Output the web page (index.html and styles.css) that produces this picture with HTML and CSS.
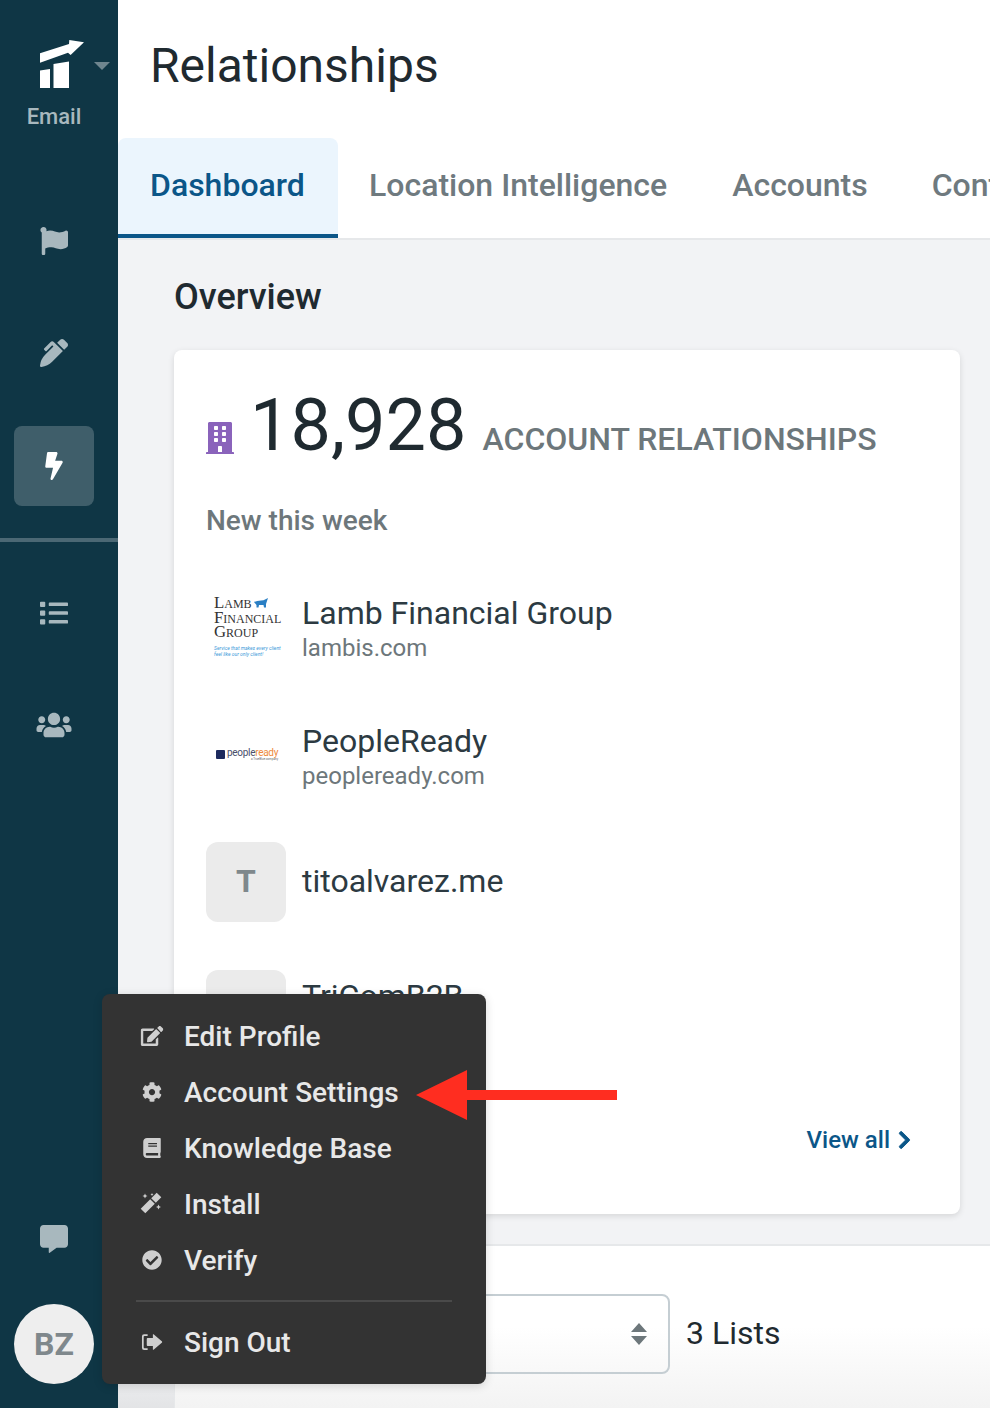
FILE: index.html
```html
<!DOCTYPE html>
<html lang="en">
  <head>
    <meta charset="UTF-8" />
    <title>Relationships</title>
    <link rel="stylesheet" href="styles.css">
  </head>
  <body>
    <div class="app">
      <div class="sidebar">
        <div class="brand">
          <svg class="brand-logo" viewBox="0 0 46 48" width="46" height="48">
            <path fill="#fff" d="M0 13.300 L29 4 L29.300 0 L44 2.300 L30.600 15 L28 12.700 L0 22.700 Z" />
            <path fill="#fff" d="M0 30.600 L10 29 V48 H0 Z" />
            <path fill="#fff" d="M13.500 24 L29 21.600 V48 H13.500 Z" />
          </svg>
          <span class="brand-caret"></span>
          <div class="brand-label">Email</div>
        </div>
        <a class="nav-item">
          <svg viewBox="0 0 512 512" width="28" height="28"><path d="M349.565 98.783C295.978 98.783 251.721 64 184.348 64c-24.955 0-47.309 4.384-68.045 12.013a55.947 55.947 0 0 0 3.586-23.562C118.117 24.015 94.806 1.206 66.338.048 34.345-1.254 8 24.296 8 56c0 19.026 9.497 35.825 24 45.945V488c0 13.255 10.745 24 24 24h16c13.255 0 24-10.745 24-24v-94.4c28.311-12.064 63.582-22.122 114.435-22.122 53.588 0 97.844 34.783 165.217 34.783 48.169 0 86.667-16.294 122.505-40.858C506.84 359.452 512 349.571 512 339.045v-243.1c0-23.393-24.269-38.87-45.485-29.016-34.338 15.948-76.454 31.854-116.95 31.854z" /></svg>
        </a>
        <a class="nav-item nav-pen">
          <svg viewBox="0 0 512 512" width="28" height="28"><path d="M497.94 74.17l-60.11-60.11c-18.75-18.75-49.16-18.75-67.91 0l-56.55 56.55 128.02 128.02 56.55-56.55c18.75-18.75 18.75-49.15 0-67.91zm-246.8-20.53c-15.62-15.62-40.94-15.62-56.56 0L75.8 172.43c-6.25 6.25-6.25 16.38 0 22.62l22.63 22.63c6.25 6.25 16.38 6.25 22.63 0l101.82-101.82 22.63 22.62L93.95 290.03A327.038 327.038 0 0 0 .17 485.11l-.03.23c-1.7 15.28 11.21 28.2 26.49 26.51a327.02 327.02 0 0 0 195.34-93.8l196.79-196.79-82.77-82.77-84.85-84.85z" /></svg>
        </a>
        <a class="nav-item active">
          <svg viewBox="0 0 320 512" width="18" height="28"><path d="M296 160H180.6l42.6-129.8C227.2 15 215.7 0 200 0H56C44 0 33.8 8.9 32.2 20.8l-32 240C-1.700 275.2 9.500 288 24 288h118.700L96.600 482.500c-3.600 15.200 8 29.500 23.300 29.500 8.400 0 16.400-4.400 20.800-12l176-304c9.300-15.900-2.200-36-20.700-36z" /></svg>
        </a>
        <div class="nav-divider"></div>
        <a class="nav-item">
          <svg viewBox="0 0 512 512" width="28" height="28"><path d="M80 368H16a16 16 0 0 0-16 16v64a16 16 0 0 0 16 16h64a16 16 0 0 0 16-16v-64a16 16 0 0 0-16-16zm0-320H16A16 16 0 0 0 0 64v64a16 16 0 0 0 16 16h64a16 16 0 0 0 16-16V64a16 16 0 0 0-16-16zm0 160H16a16 16 0 0 0-16 16v64a16 16 0 0 0 16 16h64a16 16 0 0 0 16-16v-64a16 16 0 0 0-16-16zm416 176H176a16 16 0 0 0-16 16v32a16 16 0 0 0 16 16h320a16 16 0 0 0 16-16v-32a16 16 0 0 0-16-16zm0-320H176a16 16 0 0 0-16 16v32a16 16 0 0 0 16 16h320a16 16 0 0 0 16-16V80a16 16 0 0 0-16-16zm0 160H176a16 16 0 0 0-16 16v32a16 16 0 0 0 16 16h320a16 16 0 0 0 16-16v-32a16 16 0 0 0-16-16z" /></svg>
        </a>
        <a class="nav-item">
          <svg viewBox="0 0 640 512" width="36" height="28"><path d="M96 224c35.300 0 64-28.700 64-64s-28.700-64-64-64-64 28.700-64 64 28.700 64 64 64zm448 0c35.300 0 64-28.700 64-64s-28.700-64-64-64-64 28.700-64 64 28.700 64 64 64zm32 32h-64c-17.600 0-33.500 7.100-45.100 18.600 40.300 22.100 68.900 62 75.100 109.400h66c17.700 0 32-14.300 32-32v-32c0-35.300-28.700-64-64-64zm-256 0c61.900 0 112-50.100 112-112S381.900 32 320 32 208 82.100 208 144s50.100 112 112 112zm76.800 32h-8.300c-20.800 10-43.900 16-68.500 16s-47.600-6-68.500-16h-8.300C179.600 288 128 339.600 128 403.200V432c0 26.500 21.500 48 48 48h288c26.500 0 48-21.500 48-48v-28.800c0-63.600-51.600-115.200-115.200-115.200zm-223.700-13.400C161.500 263.100 145.600 256 128 256H64c-35.300 0-64 28.700-64 64v32c0 17.700 14.300 32 32 32h65.900c6.300-47.400 34.900-87.300 75.200-109.400z" /></svg>
        </a>
        <a class="nav-item chat">
          <svg viewBox="0 0 512 512" width="28" height="28"><path d="M448 0H64C28.700 0 0 28.700 0 64v288c0 35.300 28.700 64 64 64h96v84c0 9.800 11.200 15.500 19.100 9.700L304 416h144c35.300 0 64-28.700 64-64V64c0-35.300-28.700-64-64-64z" /></svg>
        </a>
        <div class="avatar">BZ</div>

        <div class="user-menu">
          <a class="menu-item">
            <svg viewBox="0 0 576 512" width="23" height="20"><path d="M402.600 83.200l90.200 90.200c3.800 3.800 3.800 10 0 13.800L274.400 405.600l-92.800 10.300c-12.400 1.400-22.900-9.100-21.500-21.500l10.300-92.800L388.800 83.200c3.800-3.800 10-3.800 13.800 0zm162-22.900l-48.800-48.800c-15.200-15.200-39.900-15.200-55.200 0l-35.400 35.400c-3.800 3.800-3.800 10 0 13.800l90.200 90.200c3.800 3.800 10 3.800 13.800 0l35.400-35.400c15.200-15.300 15.200-40 0-55.200zM384 346.200V448H64V128h229.800c3.200 0 6.200-1.300 8.500-3.500l40-40c7.600-7.600 2.200-20.500-8.500-20.500H48C21.500 64 0 85.500 0 112v352c0 26.500 21.500 48 48 48h352c26.500 0 48-21.500 48-48V306.200c0-10.700-12.900-16-20.500-8.500l-40 40c-2.200 2.300-3.500 5.300-3.500 8.500z" /></svg>
            Edit Profile
          </a>
          <a class="menu-item">
            <svg viewBox="0 0 512 512" width="20" height="20"><path d="M487.400 315.700l-42.600-24.600c4.300-23.200 4.300-47 0-70.200l42.600-24.600c4.900-2.800 7.100-8.600 5.500-14-11.100-35.600-30-67.800-54.700-94.600-3.800-4.100-10-5.100-14.800-2.300L380.800 110c-17.900-15.400-38.500-27.300-60.800-35.100V25.800c0-5.600-3.900-10.500-9.400-11.700-36.700-8.200-74.300-7.800-109.200 0-5.500 1.200-9.400 6.100-9.400 11.700V75c-22.200 7.900-42.800 19.800-60.800 35.100L88.700 85.500c-4.900-2.800-11-1.900-14.800 2.300-24.700 26.700-43.600 58.900-54.700 94.600-1.700 5.400.6 11.200 5.500 14L67.300 221c-4.300 23.200-4.300 47 0 70.200l-42.600 24.600c-4.900 2.800-7.100 8.600-5.500 14 11.100 35.600 30 67.800 54.700 94.600 3.800 4.100 10 5.100 14.800 2.300l42.600-24.600c17.900 15.400 38.500 27.300 60.800 35.100v49.200c0 5.600 3.900 10.500 9.400 11.700 36.700 8.200 74.300 7.800 109.200 0 5.500-1.200 9.400-6.100 9.400-11.700v-49.200c22.200-7.900 42.800-19.800 60.800-35.100l42.600 24.600c4.900 2.800 11 1.900 14.800-2.300 24.700-26.700 43.600-58.900 54.700-94.600 1.500-5.500-.7-11.300-5.600-14.100zM256 336c-44.100 0-80-35.900-80-80s35.900-80 80-80 80 35.900 80 80-35.900 80-80 80z" /></svg>
            Account Settings
          </a>
          <a class="menu-item">
            <svg viewBox="0 0 448 512" width="18" height="20"><path d="M448 360V24c0-13.300-10.700-24-24-24H96C43 0 0 43 0 96v320c0 53 43 96 96 96h328c13.300 0 24-10.700 24-24v-16c0-7.500-3.500-14.300-8.900-18.700-4.200-15.400-4.200-59.300 0-74.700 5.400-4.300 8.900-11.100 8.900-18.600zM128 134c0-3.300 2.700-6 6-6h212c3.300 0 6 2.700 6 6v20c0 3.300-2.700 6-6 6H134c-3.300 0-6-2.700-6-6v-20zm0 64c0-3.300 2.700-6 6-6h212c3.300 0 6 2.700 6 6v20c0 3.300-2.700 6-6 6H134c-3.300 0-6-2.700-6-6v-20zm253.400 250H96c-17.700 0-32-14.300-32-32 0-17.600 14.400-32 32-32h285.400c-1.900 17.100-1.900 46.900 0 64z" /></svg>
            Knowledge Base
          </a>
          <a class="menu-item">
            <svg viewBox="0 0 24 24" width="24" height="24"><path d="M0.700 16.700 L5.300 21.300 L14.800 11.800 L10.200 7.200 Z M11.200 6.200 L15.800 10.800 L21.300 5.300 L16.700 0.700 Z M5 1.500 L5.800 3.200 L7.500 4 L5.800 4.800 L5 6.500 L4.200 4.800 L2.500 4 L4.200 3.200 Z M12 1 L12.500 2 L13.500 2.500 L12.500 3 L12 4 L11.500 3 L10.500 2.500 L11.500 2 Z M18.500 12.500 L19.300 14.200 L21 15 L19.300 15.800 L18.500 17.500 L17.700 15.800 L16 15 L17.700 14.200 Z" /></svg>
            Install
          </a>
          <a class="menu-item">
            <svg viewBox="0 0 512 512" width="20" height="20"><path d="M504 256c0 136.967-111.033 248-248 248S8 392.967 8 256 119.033 8 256 8s248 111.033 248 248zM227.314 387.314l184-184c6.248-6.248 6.248-16.379 0-22.627l-22.627-22.627c-6.248-6.249-16.379-6.249-22.628 0L216 308.118l-70.059-70.059c-6.248-6.248-16.379-6.248-22.628 0l-22.627 22.627c-6.248 6.248-6.248 16.379 0 22.627l104 104c6.249 6.249 16.379 6.249 22.628.001z" /></svg>
            Verify
          </a>
          <div class="menu-divider"></div>
          <a class="menu-item">
            <svg viewBox="0 0 24 20" width="21" height="18"><path d="M13 5.500 V1.500 Q13 0.800 13.800 1.200 L23.500 9.300 Q24 10 23.500 10.700 L13.800 18.800 Q13 19.200 13 18.500 V14.500 H7 Q6 14.500 6 13.500 V6.500 Q6 5.500 7 5.500 Z M7 1 V3 H3.500 Q2.500 3 2.500 4 V16 Q2.500 17 3.500 17 H7 V19 H3 Q0.500 19 0.500 16.500 V3.500 Q0.500 1 3 1 Z" /></svg>
            Sign Out
          </a>
        </div>
      </div>

      <div class="main">
        <div class="page-header">
          <h1>Relationships</h1>
        </div>
        <div class="tabs">
          <a class="tab active">Dashboard</a>
          <a class="tab tab-long">Location Intelligence</a>
          <a class="tab">Accounts</a>
          <a class="tab">Contacts</a>
        </div>

        <div class="overview">
          <h2>Overview</h2>
          <div class="card">
            <div class="stat">
              <svg class="stat-icon" viewBox="0 0 448 512" width="28" height="32"><path d="M436 480h-20V24c0-13.255-10.745-24-24-24H56C42.745 0 32 10.745 32 24v456H12c-6.627 0-12 5.373-12 12v20h448v-20c0-6.627-5.373-12-12-12zM128 76c0-6.627 5.373-12 12-12h40c6.627 0 12 5.373 12 12v40c0 6.627-5.373 12-12 12h-40c-6.627 0-12-5.373-12-12V76zm0 96c0-6.627 5.373-12 12-12h40c6.627 0 12 5.373 12 12v40c0 6.627-5.373 12-12 12h-40c-6.627 0-12-5.373-12-12v-40zm52 148h-40c-6.627 0-12-5.373-12-12v-40c0-6.627 5.373-12 12-12h40c6.627 0 12 5.373 12 12v40c0 6.627-5.373 12-12 12zm76 160h-64v-84c0-6.627 5.373-12 12-12h40c6.627 0 12 5.373 12 12v84zm64-172c0 6.627-5.373 12-12 12h-40c-6.627 0-12-5.373-12-12v-40c0-6.627 5.373-12 12-12h40c6.627 0 12 5.373 12 12v40zm0-96c0 6.627-5.373 12-12 12h-40c-6.627 0-12-5.373-12-12v-40c0-6.627 5.373-12 12-12h40c6.627 0 12 5.373 12 12v40zm0-96c0 6.627-5.373 12-12 12h-40c-6.627 0-12-5.373-12-12V76c0-6.627 5.373-12 12-12h40c6.627 0 12 5.373 12 12v40z" /></svg>
              <span class="stat-number">18,928</span>
              <span class="stat-label">ACCOUNT RELATIONSHIPS</span>
            </div>
            <div class="new-title">New this week</div>
            <div class="account-list">
              <div class="account">
                <div class="logo logo-lamb">
                  <div class="lamb-name">Lamb <svg viewBox="0 0 14 10" width="14" height="10"><path fill="#2a7fc4" d="M0 4 Q3 2.500 7 2.500 Q10 2.500 11 1.500 L14 0 L13 3 L12 6 V9.500 H10 L9.500 7 H5 L4.500 9.500 H2.500 L2.500 7 Z" /></svg></div>
                  <div class="lamb-name">Financial</div>
                  <div class="lamb-name">Group</div>
                  <div class="lamb-tag">Service that makes every client feel like our only client!</div>
                </div>
                <div class="account-info">
                  <div class="account-name">Lamb Financial Group</div>
                  <div class="account-domain">lambis.com</div>
                </div>
              </div>
              <div class="account">
                <div class="logo logo-people">
                  <span class="people-mark"></span>
                  <div>
                    <div class="people-word">people<span class="people-ready">ready</span></div>
                    <div class="people-sub">a TrueBlue company</div>
                  </div>
                </div>
                <div class="account-info">
                  <div class="account-name">PeopleReady</div>
                  <div class="account-domain">peopleready.com</div>
                </div>
              </div>
              <div class="account">
                <div class="logo logo-letter">T</div>
                <div class="account-name single">titoalvarez.me</div>
              </div>
              <div class="account">
                <div class="logo logo-letter"></div>
                <div class="account-name cut">TriComB2B</div>
              </div>
            </div>
            <a class="view-all">
              View all
              <svg viewBox="0 0 320 512" width="13" height="20"><path d="M285.476 272.971L91.132 467.314c-9.373 9.373-24.569 9.373-33.941 0l-22.667-22.667c-9.357-9.357-9.375-24.522-.04-33.901L188.505 256 34.484 101.255c-9.335-9.379-9.317-24.544.04-33.901l22.667-22.667c9.373-9.373 24.569-9.373 33.941 0L285.475 239.030c9.373 9.372 9.373 24.568.001 33.941z" /></svg>
            </a>
          </div>
        </div>

        <div class="lists-section">
          <div class="lists-panel">
            <div class="list-select">
              <svg viewBox="0 0 16 22" width="16" height="22"><path d="M8 0 L16 9 H0 Z M0 13 H16 L8 22 Z" /></svg>
            </div>
            <span class="list-count">3 Lists</span>
          </div>
        </div>
      </div>

      <svg class="red-arrow" viewBox="0 0 201 50" width="201" height="50"><path d="M0 25 L51 0 V20 H201 V30 H51 V50 Z" /></svg>
    </div>
  </body>
</html>
```

FILE: styles.css
```css
html,
body {
  margin: 0;
  height: 100%;
  overflow: hidden;
}
body {
  font-family: Roboto, "Liberation Sans", sans-serif;
  background-color: #fff;
  color: #1f2a30;
}
a {
  color: inherit;
  text-decoration: none;
}

.app {
  position: relative;
  display: flex;
  width: 990px;
  height: 1408px;
  overflow: hidden;
}

/* left rail */
.sidebar {
  position: relative;
  flex: 0 0 118px;
  display: flex;
  flex-direction: column;
  align-items: flex-start;
  background-color: #0f3645;
  box-sizing: border-box;
  padding-bottom: 24px;
}
.brand {
  position: relative;
  height: 201px;
  width: 118px;
}
.brand-logo {
  position: absolute;
  left: 40px;
  top: 40px;
}
.brand-caret {
  position: absolute;
  left: 94px;
  top: 62px;
  border-left: 8px solid transparent;
  border-right: 8px solid transparent;
  border-top: 8px solid #6f868f;
}
.brand-label {
  position: absolute;
  left: 0;
  top: 104px;
  width: 108px;
  text-align: center;
  font-size: 22px;
  font-weight: 500;
  line-height: 26px;
  color: #a8b8be;
}
.nav-item {
  display: flex;
  align-items: center;
  justify-content: center;
  width: 80px;
  height: 80px;
  margin: 0 0 32px 14px;
  border-radius: 8px;
  fill: #a8b8be;
}
.nav-item.nav-pen {
  margin-bottom: 33px;
}
.nav-item.active {
  background-color: #3f5e6a;
  fill: #fff;
}
.nav-item.chat {
  margin-top: auto;
  margin-bottom: 25px;
}
.nav-divider {
  width: 118px;
  height: 4px;
  flex: none;
  margin-bottom: 31px;
  background-color: #4b6874;
}
.avatar {
  width: 80px;
  height: 80px;
  flex: none;
  margin-left: 14px;
  border-radius: 50%;
  background-color: #eeeeee;
  color: #7f888c;
  font-size: 32px;
  font-weight: 700;
  line-height: 80px;
  text-align: center;
}

/* user popup */
.user-menu {
  position: absolute;
  left: 102px;
  top: 994px;
  width: 384px;
  height: 390px;
  box-sizing: border-box;
  padding: 14px 34px 0;
  background-color: #333333;
  border-radius: 8px;
  box-shadow: 0 2px 10px rgba(0, 0, 0, 0.15);
  z-index: 5;
}
.menu-item {
  display: flex;
  align-items: center;
  height: 56px;
  font-size: 28px;
  font-weight: 500;
  color: #e8e8e8;
  fill: #cfcfcf;
  position: relative;
  padding-left: 48px;
}
.menu-item svg {
  position: absolute;
  left: 16px;
  top: 50%;
  transform: translate(-50%, -50%);
}
.menu-divider {
  height: 2px;
  margin: 12px 0;
  background-color: #4a4a4a;
}

/* main column */
.main {
  flex: 1;
  min-width: 0;
  display: flex;
  flex-direction: column;
}
.page-header {
  height: 138px;
  padding-left: 32px;
  box-sizing: border-box;
}
h1 {
  margin: 0;
  font-size: 48px;
  font-weight: 400;
  line-height: 132px;
  color: #1f2a30;
}
.tabs {
  display: flex;
  height: 102px;
  flex: none;
  box-sizing: border-box;
  border-bottom: 2px solid #e6e8ea;
  white-space: nowrap;
}
.tab {
  flex: none;
  height: 100px;
  box-sizing: border-box;
  padding: 0 32px;
  font-size: 32px;
  font-weight: 500;
  line-height: 94px;
  color: #6f7a7f;
}
.tab.active {
  width: 220px;
  margin-right: -1px;
  background-color: #ebf5fd;
  border-radius: 8px 8px 0 0;
  border-bottom: 4px solid #0b5688;
  color: #0b5688;
}
.tab-long {
  padding-right: 33px;
}

.overview {
  flex: none;
  height: 1006px;
  box-sizing: border-box;
  padding: 0 30px 0 56px;
  background-color: #f2f3f5;
  border-bottom: 2px solid #e6e8ea;
}
h2 {
  margin: 0;
  height: 110px;
  font-size: 36px;
  font-weight: 500;
  line-height: 114px;
  color: #1f2a30;
}
.card {
  position: relative;
  height: 864px;
  box-sizing: border-box;
  padding: 0 32px;
  background: #fff;
  border-radius: 8px;
  box-shadow: 0 2px 6px rgba(0, 0, 0, 0.12);
  overflow: hidden;
}
.stat {
  display: flex;
  align-items: baseline;
  padding-top: 31px;
  height: 90px;
}
.stat-icon {
  fill: #8a63bb;
  align-self: flex-end;
  margin-bottom: 17px;
  margin-right: 16px;
}
.stat-number {
  font-size: 72px;
  line-height: 90px;
  color: #1f2a30;
  margin-right: 16px;
}
.stat-label {
  font-size: 32px;
  font-weight: 500;
  color: #6d777b;
}
.new-title {
  margin-top: 32px;
  font-size: 28px;
  font-weight: 500;
  line-height: 36px;
  color: #6d777b;
}
.account-list {
  margin-top: 47px;
  display: flex;
  flex-direction: column;
  gap: 48px;
}
.account {
  display: flex;
  align-items: center;
  gap: 16px;
  height: 80px;
}
.account-info {
  margin-top: 4px;
}
.account-name {
  font-size: 32px;
  line-height: 40px;
  color: #2c3a42;
}
.account-name.single {
  margin-bottom: 2px;
}
.account-name.cut {
  align-self: flex-start;
  margin-top: 6px;
}
.account-domain {
  font-size: 24px;
  line-height: 30px;
  color: #6d777b;
}
.logo {
  flex: 0 0 80px;
  height: 80px;
  border-radius: 12px;
}
.logo-letter {
  background-color: #ebebeb;
  color: #7f888c;
  font-size: 32px;
  font-weight: 700;
  line-height: 78px;
  text-align: center;
}
.logo-lamb {
  box-sizing: border-box;
  padding: 10px 0 0 8px;
}
.lamb-name {
  display: flex;
  align-items: center;
  gap: 2px;
  font-family: "Liberation Serif", serif;
  font-variant: small-caps;
  font-size: 16.800px;
  line-height: 14.500px;
  color: #333;
  white-space: nowrap;
}
.lamb-tag {
  margin-top: 5px;
  font-size: 5px;
  font-style: italic;
  line-height: 6px;
  color: #3d9ad9;
  width: 70px;
}
.logo-people {
  display: flex;
  align-items: center;
  padding-left: 10px;
  box-sizing: border-box;
  gap: 2px;
}
.people-mark {
  width: 9px;
  height: 9px;
  flex: none;
  border-radius: 1px;
  background-color: #1d2a5e;
}
.people-word {
  font-size: 10px;
  line-height: 10px;
  letter-spacing: -0.3px;
  color: #4a4f6b;
}
.people-ready {
  color: #ee8a3c;
}
.people-sub {
  font-size: 3px;
  line-height: 3px;
  text-align: right;
  color: #666;
}
.view-all {
  position: absolute;
  right: 49px;
  bottom: 59px;
  display: flex;
  align-items: center;
  gap: 8px;
  font-size: 24px;
  font-weight: 500;
  line-height: 30px;
  color: #0b5688;
  fill: #0b5688;
}
.view-all svg {
  stroke: #0b5688;
  stroke-width: 24px;
}

/* bottom panel */
.lists-section {
  flex: 1;
  padding-left: 56px;
  background: linear-gradient(#f2f3f5 70%, #e3e4e6);
}
.lists-panel {
  display: flex;
  align-items: center;
  gap: 16px;
  height: 100%;
  box-sizing: border-box;
  padding: 48px 0 34px 32px;
  background: linear-gradient(#fff 50%, #f3f3f3);
  border-left: 1px solid #e6e8ea;
}
.list-select {
  display: flex;
  align-items: center;
  justify-content: flex-end;
  width: 463px;
  height: 80px;
  box-sizing: border-box;
  padding-right: 21px;
  border: 2px solid #c5ced3;
  border-radius: 8px;
  fill: #6d777b;
}
.list-count {
  font-size: 32px;
  margin-bottom: 2px;
  color: #1f2a30;
}

.red-arrow {
  position: absolute;
  left: 416px;
  top: 1070px;
  fill: #ff2d20;
  z-index: 6;
}
```
